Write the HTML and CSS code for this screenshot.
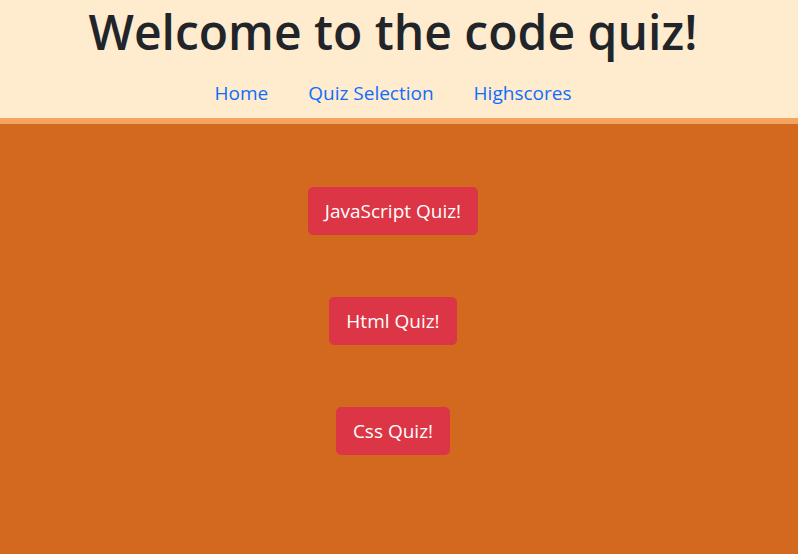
FILE: index.html
```html
<!DOCTYPE html>
<html lang="en">
<head>
<meta charset="utf-8">
<title>Code Quiz</title>
<link rel="stylesheet" href="styles.css">
</head>
<body>
<header class="site-header">
  <h1 class="title">Welcome to the code quiz!</h1>
  <nav class="nav">
    <a class="nav-link" href="#">Home</a>
    <a class="nav-link" href="#">Quiz Selection</a>
    <a class="nav-link" href="#">Highscores</a>
  </nav>
</header>
<main class="quiz-list">
  <button class="btn">JavaScript Quiz!</button>
  <button class="btn">Html Quiz!</button>
  <button class="btn">Css Quiz!</button>
</main>
</body>
</html>
```
FILE: styles.css
```css
html, body {
  margin: 0;
  padding: 0;
  height: 100%;
}
body {
  font-family: "Open Sans", "Noto Sans", sans-serif;
  background: #d2691e;
  color: #212529;
}
.site-header {
  background: #ffebcd;
  border-bottom: 6px solid #f4a460;
  text-align: center;
  box-sizing: border-box;
  height: 124px;
  padding-right: 12px;
}
.title {
  margin: 0;
  font-weight: 600;
  font-size: 48px;
  line-height: 64px;
  letter-spacing: 0;
}
.nav {
  display: flex;
  justify-content: center;
  gap: 40px;
  padding-top: 14px;
}
.nav-link {
  color: #0d6efd;
  text-decoration: none;
  font-size: 19px;
  line-height: 30px;
}
.quiz-list {
  display: flex;
  flex-direction: column;
  align-items: center;
  gap: 62px;
  padding-top: 63px;
  padding-right: 12px;
}
.btn {
  font-family: inherit;
  font-size: 19px;
  line-height: 30px;
  padding: 8px 16px;
  color: #fff;
  background: #dc3545;
  border: 1px solid #dc3545;
  border-radius: 5px;
}
```
